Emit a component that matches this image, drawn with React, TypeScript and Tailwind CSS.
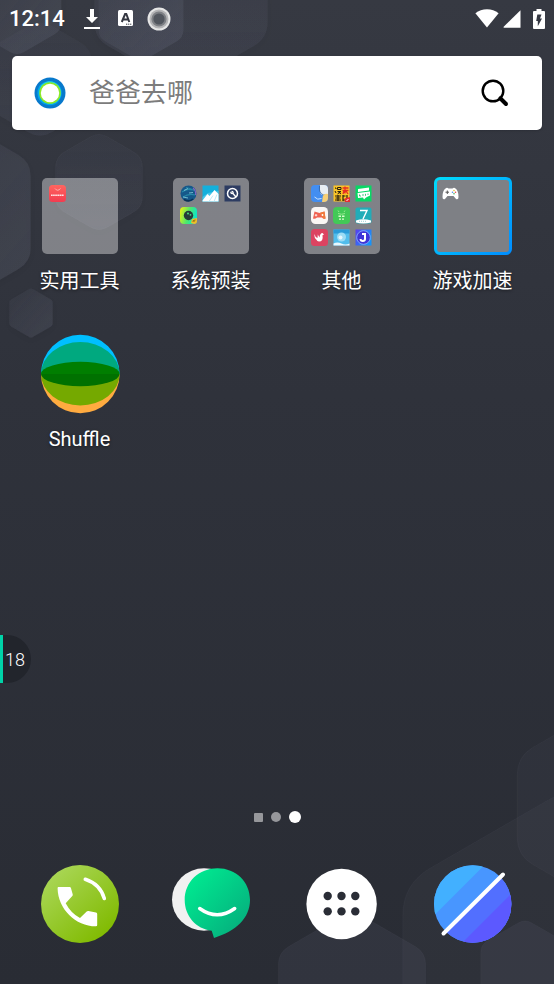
import type { ReactNode } from "react";

const hexPath = (cx: number, cy: number, r: number, corner: number) => {
  const points = [0, 1, 2, 3, 4, 5].map((i) => {
    const angle = (Math.PI / 3) * i - Math.PI / 2;
    return [cx + r * Math.cos(angle), cy + r * Math.sin(angle)];
  });
  const t = corner / r;
  const parts = points.map(([x, y], i) => {
    const [px, py] = points[(i + 5) % 6];
    const [nx, ny] = points[(i + 1) % 6];
    const start = `${x + (px - x) * t} ${y + (py - y) * t}`;
    const end = `${x + (nx - x) * t} ${y + (ny - y) * t}`;
    return `${i === 0 ? "M" : "L"}${start}Q${x} ${y} ${end}`;
  });
  return `${parts.join("")}Z`;
};

function Wallpaper() {
  return (
    <div className="pointer-events-none absolute inset-0 -z-10 overflow-hidden" aria-hidden="true">
      <svg className="absolute top-0 left-0" width="280" height="345" viewBox="0 0 280 345">
        <defs>
          <linearGradient id="hexTop" x1="0" y1="0" x2="1" y2="1">
            <stop offset="0" stopColor="#7f849c" stopOpacity="0.06" />
            <stop offset="1" stopColor="#8a8fa5" stopOpacity="0.15" />
          </linearGradient>
          <linearGradient id="hexFaint" x1="0" y1="0" x2="0" y2="1">
            <stop offset="0" stopColor="#8084a0" stopOpacity="0.04" />
            <stop offset="1" stopColor="#8084a0" stopOpacity="0.09" />
          </linearGradient>
          <filter id="hexShadow" x="-20%" y="-20%" width="140%" height="140%">
            <feDropShadow dx="0" dy="2" stdDeviation="4" floodColor="#1c1e26" floodOpacity="0.5" />
          </filter>
        </defs>
        <g filter="url(#hexShadow)">
          <path d={hexPath(181, -12, 100, 16)} fill="url(#hexFaint)" />
          <path d={hexPath(40, 79, 60, 14)} fill="url(#hexFaint)" />
          <path d={hexPath(17, 5, 51, 8)} fill="url(#hexTop)" />
          <path d={hexPath(141, 13, 49, 8)} fill="url(#hexTop)" />
          <path d={hexPath(-56, 212, 100, 14)} fill="url(#hexTop)" />
          <path d={hexPath(99, 182, 50, 10)} fill="url(#hexFaint)" stroke="#8084a0" strokeOpacity="0.06" />
          <path d={hexPath(31, 313, 25, 2)} fill="url(#hexTop)" />
        </g>
      </svg>
      <svg className="absolute right-0 bottom-0" width="280" height="264" viewBox="274 720 280 264">
        <g stroke="#9aa0b8" strokeOpacity="0.05">
          <path d={hexPath(603, 806, 99, 18)} fill="#8b90a0" fillOpacity="0.05" />
          <path d={hexPath(576, 984, 200, 32)} fill="#8084a0" fillOpacity="0.06" />
          <path d={hexPath(352, 995, 85, 12)} fill="#8084a0" fillOpacity="0.1" />
          <path d={hexPath(525, 970, 51, 8)} fill="#8084a0" fillOpacity="0.1" />
        </g>
      </svg>
    </div>
  );
}

function StatusBar() {
  return (
    <header className="flex h-[37px] items-center pr-[9px] pl-[9px] text-white">
      <time className="text-[22px] leading-[37px] font-medium">12:14</time>
      <svg className="ml-[19px]" width="16" height="22" viewBox="0 0 16 22" fill="currentColor">
        <path d="M6 1h4v8h4l-6 6-6-6h4zM0 19h16v2H0z" />
      </svg>
      <svg className="ml-[18px]" width="15" height="17" viewBox="0 0 15 17">
        <rect width="15" height="16" rx="1.500" fill="#fff" />
        <path d="M3.800 12 7.100 4h1.200l3 8M5.200 9.600h4.800" fill="none" stroke="#343741" strokeWidth="2" />
        <path d="M8 14.200h1.300m.8 0h1.200m.8 0h1.200" stroke="#343741" strokeWidth="1" />
      </svg>
      <svg className="ml-[14px]" width="24" height="24" viewBox="0 0 24 24">
        <circle cx="12" cy="12" r="11.500" fill="#e6e6e6" />
        <circle cx="12" cy="12" r="9.500" fill="#b4b4b6" />
        <circle cx="12" cy="12" r="7.600" fill="#7d7f84" />
        <circle cx="12" cy="12" r="5.600" fill="#52565e" />
      </svg>
      <svg className="ml-auto" width="24" height="20" viewBox="0 0 24 20" fill="currentColor">
        <path d="M12 18.500.4 4.300C3.700 1.700 7.600.300 12 .3s8.300 1.400 11.600 4z" />
      </svg>
      <svg className="ml-[4px]" width="18" height="20" viewBox="0 0 18 20" fill="currentColor">
        <path d="M17.500 1.300v17.400H1.200q-1.200 0-.5-1z" />
      </svg>
      <svg className="ml-[12px]" width="12" height="20" viewBox="0 0 12 20">
        <path d="M3.500 0h5v2H11q1 0 1 1v16q0 1-1 1H1q-1 0-1-1V3q0-1 1-1h2.500z" fill="#fff" />
        <path d="M4.300 5.500H8.500L7 9.500h2L4.800 17.300V12H3.200z" fill="#343741" />
      </svg>
    </header>
  );
}

function SearchBar() {
  return (
    <form
      role="search"
      className="mx-3 mt-[19px] flex h-[74px] items-center rounded-[5px] bg-white pr-[31px] pl-[22px] shadow-sm"
      onSubmit={(e) => e.preventDefault()}
    >
      <svg className="shrink-0" width="32" height="32" viewBox="0 0 32 32">
        <circle cx="16" cy="16" r="15.500" fill="#0879cc" />
        <path d="M4 20C1 9 10 2 20 5c9 3 10 14 4 20S6 28 4 20z" fill="#00a9ec" />
        <path d="M6 11C9 3 19 2 24 8s4 15-4 18S3 20 6 11z" fill="#18d3e6" />
        <circle cx="16" cy="16" r="10.800" fill="#8be827" />
        <circle cx="16" cy="16" r="9.200" fill="#fff" />
      </svg>
      <input
        type="search"
        aria-label="搜索"
        placeholder="爸爸去哪"
        className="ml-[23px] h-[48px] min-w-0 flex-1 bg-transparent text-[26px] leading-[48px] text-black outline-none placeholder:text-[#7c7c7c]"
      />
      <button type="submit" aria-label="搜索" className="shrink-0">
        <svg width="32" height="32" viewBox="0 0 32 32" fill="none" stroke="#000">
          <circle cx="14" cy="14" r="10.300" strokeWidth="2.400" />
          <path d="m22 22 5 5" strokeWidth="4" strokeLinecap="round" />
          <path d="m20 20 3 3" strokeWidth="2.500" />
        </svg>
      </button>
    </form>
  );
}

function MiniIcon({ children }: { children: ReactNode }) {
  return (
    <svg width="17" height="17" viewBox="0 0 17 17">
      {children}
    </svg>
  );
}

const toolIcons = [
  <MiniIcon key="store">
    <defs>
      <linearGradient id="store" x1="0" y1="0" x2="0" y2="1">
        <stop stopColor="#ff655f" />
        <stop offset="1" stopColor="#f23c50" />
      </linearGradient>
    </defs>
    <rect width="17" height="17" rx="3.500" fill="url(#store)" />
    <path d="M6 3.500q2.500 3.500 5.500 0" fill="none" stroke="#ffc5c2" strokeWidth=".8" />
    <path d="M2 10.300h13" stroke="#ffe3e3" strokeWidth="1.600" strokeDasharray="1.700 .4" />
  </MiniIcon>,
];

const systemIcons = [
  <MiniIcon key="globe">
    <circle cx="8.500" cy="8.500" r="8" fill="#15588a" />
    <path d="M2 7q5-4 10-2M3 12q6-4 12-2M6 2.500q5 1 8 3" fill="none" stroke="#2587a8" strokeWidth="1.200" />
    <path d="M4 5.500 8 3.500M9 8l4-.5M3 12l5 1" stroke="#8ad2e0" strokeWidth=".8" />
    <path d="M13 3q3.500 3 2.500 7" fill="none" stroke="#8664c4" strokeWidth="1.200" />
    <path d="M4 14.500q5 3 9-.5" fill="none" stroke="#0b3054" strokeWidth="1.500" />
  </MiniIcon>,
  <MiniIcon key="gallery">
    <path d="M.500.500h16v16H.500z" fill="#14b0dc" />
    <path d="M.500 12 6 8l10.500-2v10.500H.500z" fill="#45c5e8" />
    <path d="M.500 15.500 5.500 9l2 2 5-6 4 4v7.500H.500z" fill="#fff" />
    <path d="m7 16.500 4-6M12 16.500l3-7" stroke="#bdeaf7" strokeWidth="1" />
  </MiniIcon>,
  <MiniIcon key="wrench">
    <path d="M.500.500h16v16H.500z" fill="#2d3c62" />
    <circle cx="8.500" cy="8.500" r="5" fill="none" stroke="#fff" strokeWidth="1.500" />
    <path d="M8.300 7.800 12 12" stroke="#fff" strokeWidth="1.400" />
    <circle cx="8" cy="7.500" r="1.700" fill="#fff" />
    <path d="m6 5.500 2 2" stroke="#2d3c62" />
  </MiniIcon>,
  <MiniIcon key="camera">
    <defs>
      <linearGradient id="camera" x1="0" y1="0.300" x2="1" y2="0.600">
        <stop stopColor="#dff01c" />
        <stop offset=".5" stopColor="#4de86b" />
        <stop offset="1" stopColor="#05e3d5" />
      </linearGradient>
    </defs>
    <rect width="17" height="17" rx="4" fill="url(#camera)" />
    <circle cx="8.500" cy="8.500" r="4.700" fill="#263a39" />
    <circle cx="8" cy="6.500" r="1" fill="#47de82" />
    <circle cx="10.500" cy="7.800" r=".9" fill="#47de82" />
    <path d="m11 16 1-4 5-1v3q0 3-3 3z" fill="#f0bd27" />
    <path d="m13 15 .5-2m1 1.500L15 12.500" stroke="#775b12" strokeWidth=".8" />
  </MiniIcon>,
];

const otherIcons = [
  <MiniIcon key="finder">
    <rect width="17" height="17" rx="4" fill="#438ef0" />
    <path d="M9 0h4q4 0 4 4v6q-3-2-5 0-3 0-3-4z" fill="#e8edf2" />
    <path d="M17 9v4q0 4-4 4h-2l1-7q3-2 5-1z" fill="#f7cf76" />
    <path d="M3.500 12q3 3.500 7 1.500" fill="none" stroke="#d8eaff" strokeWidth=".9" />
    <path d="M8.500 1q-1 7 4 9" fill="none" stroke="#315c93" strokeWidth=".7" />
  </MiniIcon>,
  <MiniIcon key="comic">
    <path d="M.500.500h16v16H.500z" fill="#fbc526" />
    <path d="M2 3h1v1M2 6l1 2M4.500 2.500h3.500v2H4.500zM4.500 6.500h3.500L4.500 9M5 6.500 8 9" fill="none" stroke="#29200e" />
    <path d="M9.500 3h6M12 1.500v7M9.500 5.500h6M10 9l1-3M15 9l-2-3" fill="none" stroke="#e62d24" strokeWidth="1.300" />
    <path d="M2 11h6M2 15h6M5 10v6M2.500 13h5M9.500 11h3M9.500 15h3M10 10v6M14 10v4" stroke="#29200e" strokeWidth="1.200" />
    <path d="M11.500 13.500 17 12v5h-5z" fill="#e62d33" />
    <path d="m13.500 15.500 2-1" stroke="#fff" />
  </MiniIcon>,
  <MiniIcon key="chat">
    <path d="M.500.500h16v16H.500z" fill="#08d865" />
    <path d="m3 4 11-1.500v3L3 7zM2.500 8 15 6.500v4l-4 2-2 2-1-2-5 .5z" fill="#fff" />
    <path d="M4.500 9.500v1.500H6M8 9v2M10.500 8.800v2M13 8.500v1.500" fill="none" stroke="#0abd5a" strokeWidth=".8" />
  </MiniIcon>,
  <MiniIcon key="gamepad">
    <rect width="17" height="17" rx="4.500" fill="#faf7f5" />
    <path d="M3.500 4.500 8.500 6l5-1.500 1 7q-2 1-3.500-1H6q-2 2-4 1z" fill="#ef6252" />
    <path d="m8.500 6 5-1.500 1 7q-2 1-3-1z" fill="#f07b3c" />
    <path d="M5 7v2.500M3.800 8.200h2.500" stroke="#fff" strokeWidth=".8" />
    <circle cx="11.500" cy="8" r=".9" fill="#fff" />
  </MiniIcon>,
  <MiniIcon key="android">
    <rect width="17" height="17" rx="4" fill="#42c957" />
    <path d="m5 3.500 1 1.500m6-1.500L11 5M5 6.500q3.500 1.500 7 0" fill="none" stroke="#9bed91" strokeWidth=".9" />
    <path d="M5.500 8.500h2.500v1.500H5.500zm3.500 0h2.500v1.500H9zM6 11.500h2v1.200H6zm3 0h2v1.200H9z" fill="#d9ffce" />
  </MiniIcon>,
  <MiniIcon key="seven">
    <rect x=".5" y=".5" width="16" height="16" rx="2" fill="#22acb8" />
    <path d="M5 3.500h7L8 12" fill="none" stroke="#fff" strokeWidth="1.400" />
    <path d="M1 13.500q7-2.500 15 0v2q-8 2-15 0z" fill="#fff" />
    <path d="M4 14.300h8" stroke="#73bfc5" strokeWidth=".7" strokeDasharray="1 1" />
  </MiniIcon>,
  <MiniIcon key="bird">
    <rect width="17" height="17" rx="3.500" fill="#dc4361" />
    <path d="M3.500 5Q4 8 6.500 9L6.800 5.500 8.500 8.500Q9 4 11.500 4l1.500 1.500-1.500.7Q12.500 12.500 8 12.500q-2 0-2.500-1.800Q3 9 3.500 5z" fill="#fff" />
  </MiniIcon>,
  <MiniIcon key="cloud">
    <path d="M.500.500h16v16H.500z" fill="#51bdec" />
    <path d="M.500.500h16v4H.500z" fill="#2a9bd8" />
    <circle cx="8.500" cy="8" r="4.500" fill="#9bdcf5" />
    <circle cx="7.500" cy="8.500" r="2" fill="#e3f7ff" />
    <path d="M.500 14.500q4-2 8 0t8 0v2H.500z" fill="#e8f8ff" />
  </MiniIcon>,
  <MiniIcon key="letter">
    <defs>
      <linearGradient id="letter" x1="0" y1="0" x2="1" y2="0.500">
        <stop stopColor="#5a3df0" />
        <stop offset="1" stopColor="#1693fb" />
      </linearGradient>
    </defs>
    <path d="M.500.500h16v16H.500z" fill="url(#letter)" />
    <circle cx="8.500" cy="8.500" r="6.800" fill="#3f35d8" stroke="#9cc9ff" strokeWidth=".7" />
    <path d="M7 5h3v5q0 2-2.200 2T5.500 10" fill="none" stroke="#fff" strokeWidth="2" />
  </MiniIcon>,
];

function PreviewGrid({ icons }: { icons: ReactNode[] }) {
  return <span className="grid grid-cols-[repeat(3,17px)] gap-[5px]">{icons}</span>;
}

function Folder({ icons }: { icons: ReactNode[] }) {
  return (
    <span className="block h-[76px] w-[76px] rounded-[5px] bg-white/38 p-[7px]">
      <PreviewGrid icons={icons} />
    </span>
  );
}

function BoostFolder() {
  return (
    <span className="block h-[78px] w-[78px] rounded-[6px] bg-linear-to-br from-[#00dcfa] to-[#008cff] p-[3px]">
      <span className="block h-[72px] w-[72px] rounded-[3px] bg-[#7e8085] p-[5px]">
        <MiniIcon>
          <path d="M3.500 3.500Q5 2 6.500 3.500h4Q12 2 13.500 3.500q3 2 3 8.500 0 3-2.500 2l-2.500-3h-6L3 14Q.500 15 .500 12q0-6.500 3-8.500z" fill="#fff" />
          <path d="M5.300 5.500v3.500M3.500 7.200H7" stroke="#555" />
          <circle cx="12" cy="5.500" r=".8" fill="#ecc62f" />
          <circle cx="10.500" cy="7.200" r=".8" fill="#4b8ff0" />
          <circle cx="13.500" cy="7.200" r=".8" fill="#ea4a45" />
          <circle cx="12" cy="8.700" r=".8" fill="#47b35c" />
        </MiniIcon>
      </span>
    </span>
  );
}

function ShuffleIcon() {
  return (
    <svg width="80" height="80" viewBox="0 0 80 80">
      <path d="M1 40a39.300 39.300 0 0 1 78.600 0z" fill="#00bfff" />
      <path d="M1 40a39.300 39.300 0 0 0 78.600 0z" fill="#ffab40" />
      <path d="M1 40a39.300 32 0 0 1 78.600 0z" fill="#00a97f" />
      <path d="M1 40a39.300 31.500 0 0 0 78.600 0z" fill="#75a900" />
      <path d="M1 40a39.300 12.200 0 0 1 78.600 0z" fill="#007e00" />
      <path d="M1 40a39.300 12.200 0 0 0 78.600 0z" fill="#007100" />
    </svg>
  );
}

function PhoneIcon() {
  return (
    <svg width="80" height="80" viewBox="0 0 80 80">
      <defs>
        <linearGradient id="phone" x1="0.150" y1="0.100" x2="0.850" y2="0.900">
          <stop stopColor="#a9d655" />
          <stop offset="1" stopColor="#80ba00" />
        </linearGradient>
      </defs>
      <circle cx="40" cy="40" r="39" fill="url(#phone)" />
      <path
        d="M19 23h10.500q1.300 0 1.500 1.300l1.700 6q.3 1-.4 1.700l-6.600 7.300Q31 49.500 40 54l6.700-6.500q.7-.7 1.700-.5l7.600 1.500q1.200.2 1.200 1.500V61q0 1.300-1.300 1.300C35.500 62 18 45 17.600 24.400 17.600 23 18 23 19 23z"
        fill="#fff"
      />
      <path d="M45.300 15.300Q60 20 64.300 34.500" fill="none" stroke="#fff" strokeWidth="3.600" strokeLinecap="round" />
    </svg>
  );
}

function MessageIcon() {
  return (
    <svg width="80" height="80" viewBox="0 0 80 80">
      <defs>
        <linearGradient id="message" x1="0.100" y1="0.150" x2="0.850" y2="0.850">
          <stop stopColor="#00e890" />
          <stop offset="1" stopColor="#05b27e" />
        </linearGradient>
      </defs>
      <ellipse cx="33" cy="35.500" rx="32" ry="31.200" fill="#f1f1f1" />
      <path
        d="M46.500 4.300C65 4.300 79 18 79 36c0 18-14 31-36 38l-2.300-7.300C25 65 13.700 52 13.700 36 13.700 18 28 4.300 46.500 4.300z"
        fill="url(#message)"
      />
      <path d="M28.700 44.500q17.500 12.500 35 0" fill="none" stroke="#fff" strokeWidth="3.500" strokeLinecap="round" />
    </svg>
  );
}

function AppsIcon() {
  return (
    <svg width="80" height="80" viewBox="0 0 80 80">
      <circle cx="39.600" cy="40" r="35.200" fill="#fff" />
      {[32, 47.400].map((y) =>
        [25.700, 39.500, 53.300].map((x) => <circle key={`${x}-${y}`} cx={x} cy={y} r="4.200" fill="#2a2d36" />),
      )}
    </svg>
  );
}

function BrowserIcon() {
  return (
    <svg width="80" height="80" viewBox="0 0 80 80">
      <clipPath id="planet">
        <circle cx="39.700" cy="40" r="38.700" />
      </clipPath>
      <g clipPath="url(#planet)">
        <path d="M0 0h80v80H0z" fill="#4896ff" />
        <path d="M0 0h52.500L0 52.500z" fill="#42b0ff" />
        <path d="M80 0v80H0z" fill="#526fff" />
        <path d="M80 28v52H28z" fill="#5c59ff" />
      </g>
      <path d="M70 10.500 10.500 69.500" stroke="#fff" strokeWidth="4" strokeLinecap="round" />
    </svg>
  );
}

const apps = [
  { name: "实用工具", icon: <Folder icons={toolIcons} /> },
  { name: "系统预装", icon: <Folder icons={systemIcons} /> },
  { name: "其他", icon: <Folder icons={otherIcons} /> },
  { name: "游戏加速", icon: <BoostFolder /> },
  { name: "Shuffle", icon: <ShuffleIcon /> },
];

const dock = [
  { name: "电话", icon: <PhoneIcon /> },
  { name: "信息", icon: <MessageIcon /> },
  { name: "应用", icon: <AppsIcon /> },
  { name: "浏览器", icon: <BrowserIcon /> },
];

export default function App() {
  return (
    <div className="relative isolate flex min-h-screen flex-col bg-linear-to-b from-[#363942] via-[#2f323b] via-40% to-[#292c34] font-['Roboto','Noto_Sans_CJK_SC',sans-serif]">
      <Wallpaper />
      <StatusBar />
      <SearchBar />

      <main className="mt-[46px] grid grid-cols-4 gap-x-[2px] gap-y-10 pr-[17px] pl-[15px]">
        {apps.map((app) => (
          <button key={app.name} type="button" className="flex flex-col items-center gap-3">
            <span className="flex h-20 w-20 items-center justify-center">{app.icon}</span>
            <span className="text-[20px] leading-[26px] text-white [text-shadow:0_1px_3px_rgba(0,0,0,0.5)]">
              {app.name}
            </span>
          </button>
        ))}
      </main>

      <nav className="mt-auto flex items-center justify-center gap-[8px]" aria-label="页面">
        <button type="button" aria-label="1" className="h-[9px] w-[9px] rounded-[1px] bg-[#96979b]" />
        <button type="button" aria-label="2" className="h-[10px] w-[10px] rounded-full bg-[#96979b]" />
        <button type="button" aria-label="3" aria-current="page" className="h-[12px] w-[12px] rounded-full bg-white" />
      </nav>

      <footer className="mt-[41px] grid grid-cols-4 gap-x-[2px] pr-[17px] pb-10 pl-[15px]">
        {dock.map((app) => (
          <button key={app.name} type="button" aria-label={app.name} className="flex justify-center">
            {app.icon}
          </button>
        ))}
      </footer>

      <div className="absolute top-[635px] left-0 flex h-12 w-[31px] items-center rounded-r-full border-l-[3px] border-[#00d3a8] bg-[#22252c] pl-[2px] text-[18px] font-light text-white">
        18
      </div>
    </div>
  );
}
